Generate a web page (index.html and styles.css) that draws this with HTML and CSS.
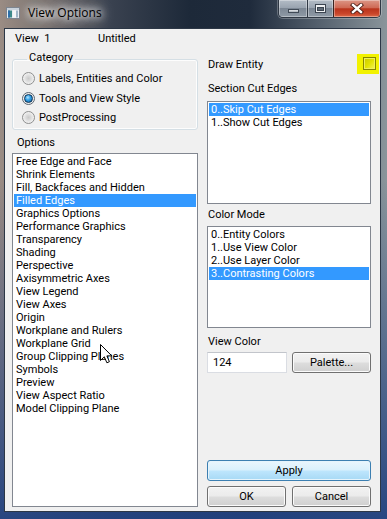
FILE: index.html
```html
<!DOCTYPE html>
<html>
<head>
<meta charset="utf-8">
<title>View Options</title>
<link rel="stylesheet" href="styles.css">
</head>
<body>
<div class="window">
  <div class="titlebar">
    <svg class="appicon" width="14" height="12" viewBox="0 0 14 12">
      <rect x="0.5" y="0.5" width="13" height="11" fill="#e8ecf0" stroke="#7d8590"/>
      <rect x="1" y="1" width="12" height="2" fill="#c9d2dc"/>
      <rect x="2" y="3.5" width="4" height="7" fill="#3d8a8a"/>
      <rect x="2" y="3.5" width="2" height="7" fill="#2d6fa8"/>
      <rect x="7" y="3.5" width="5" height="7" fill="#f4f6f8"/>
      <rect x="10" y="3.5" width="2" height="7" fill="#9fb6c9"/>
    </svg>
    <span class="title">View Options</span>
    <div class="caption">
      <div class="cbtn cmin"><span class="min-bar"></span></div>
      <div class="cbtn cmax"><span class="max-box"></span></div>
      <div class="cbtn cclose">
        <svg width="14" height="11" viewBox="0 0 14 11">
          <path d="M3,2 L11,9 M11,2 L3,9" stroke="#4a1a12" stroke-width="4.2" stroke-linecap="square"/>
          <path d="M3,2 L11,9 M11,2 L3,9" stroke="#ffffff" stroke-width="2.4" stroke-linecap="square"/>
        </svg>
      </div>
    </div>
  </div>
  <div class="client">
    <div class="viewrow"><span class="vnum">View&nbsp;&nbsp;1</span><span class="vname">Untitled</span></div>
    <div class="cols">
      <div class="leftcol">
        <fieldset class="group">
          <legend>Category</legend>
          <div class="radio-row"><span class="radio"></span><span>Labels, Entities and Color</span></div>
          <div class="radio-row"><span class="radio on"></span><span>Tools and View Style</span></div>
          <div class="radio-row"><span class="radio"></span><span>PostProcessing</span></div>
        </fieldset>
        <div class="label opt-label">Options</div>
        <ul class="listbox options">
          <li>Free Edge and Face</li>
          <li>Shrink Elements</li>
          <li>Fill, Backfaces and Hidden</li>
          <li class="sel">Filled Edges</li>
          <li>Graphics Options</li>
          <li>Performance Graphics</li>
          <li>Transparency</li>
          <li>Shading</li>
          <li>Perspective</li>
          <li>Axisymmetric Axes</li>
          <li>View Legend</li>
          <li>View Axes</li>
          <li>Origin</li>
          <li>Workplane and Rulers</li>
          <li>Workplane Grid</li>
          <li>Group Clipping Planes</li>
          <li>Symbols</li>
          <li>Preview</li>
          <li>View Aspect Ratio</li>
          <li>Model Clipping Plane</li>
        </ul>
      </div>
      <div class="rightcol">
        <div class="draw-row">
          <span class="draw-text">Draw Entity</span>
          <span class="hl"><span class="chk"></span></span>
        </div>
        <div class="label sec-label">Section Cut Edges</div>
        <ul class="listbox sec-list">
          <li class="sel">0..Skip Cut Edges</li>
          <li>1..Show Cut Edges</li>
        </ul>
        <div class="label cm-label">Color Mode</div>
        <ul class="listbox cm-list">
          <li>0..Entity Colors</li>
          <li>1..Use View Color</li>
          <li>2..Use Layer Color</li>
          <li class="sel">3..Contrasting Colors</li>
        </ul>
        <div class="label vc-label">View Color</div>
        <div class="vc-row">
          <div class="textbox">124</div>
          <div class="btn palette">Palette...</div>
        </div>
        <div class="spacer"></div>
        <div class="btn apply">Apply</div>
        <div class="btn-row">
          <div class="btn ok">OK</div>
          <div class="btn cancel">Cancel</div>
        </div>
      </div>
    </div>
  </div>
  <svg class="cursor" width="13" height="20" viewBox="0 0 13 20">
    <path d="M0.5,0.5 L0.5,16.5 L4.3,12.8 L6.9,18.8 L9.4,17.7 L6.9,11.9 L11.8,11.9 Z" fill="#ffffff" stroke="#000000" stroke-width="1" stroke-linejoin="miter"/>
  </svg>
</div>
</body>
</html>
```
FILE: styles.css
```css
* { box-sizing: border-box; }

html, body {
  margin: 0;
  padding: 0;
  width: 387px;
  height: 519px;
  overflow: hidden;
}

body {
  font-family: Roboto, "Open Sans", "DejaVu Sans", sans-serif;
  font-size: 11px;
  color: #000;
}

.window {
  position: relative;
  width: 387px;
  height: 519px;
  display: flex;
  flex-direction: column;
  background:
    linear-gradient(to bottom, rgba(30, 60, 120, 0) 0px, rgba(30, 60, 120, 0) 180px, rgba(34, 66, 128, 0.95) 519px),
    linear-gradient(to right, #9a8c84 0px, #7d7470 40px, #3a4250 110px, #1d2939 190px, #1f2b3c 250px, #55616e 320px, #8a959b 387px);
}

/* ---------- title bar ---------- */
.titlebar {
  height: 28px;
  flex: none;
  display: flex;
  align-items: flex-start;
  padding-right: 6px;
}

.appicon {
  margin: 7px 0 0 6px;
  flex: none;
}

.title {
  margin: 5px 0 0 8px;
  font-family: "Open Sans", Roboto, sans-serif;
  font-size: 12px;
  line-height: 16px;
  color: #000;
  text-shadow: 0 0 6px #fff, 0 0 10px #fff, 0 0 14px rgba(255, 255, 255, 0.9), 0 0 18px rgba(255, 255, 255, 0.7);
}

.caption {
  margin-left: auto;
  display: flex;
  height: 18px;
  border: 1px solid #2f3844;
  border-top: none;
  border-radius: 0 0 5px 5px;
  overflow: hidden;
  box-shadow: 0 0 0 1px rgba(255, 255, 255, 0.25);
}

.cbtn {
  height: 17px;
  display: flex;
  align-items: center;
  justify-content: center;
  box-shadow: inset 0 0 0 1px rgba(255, 255, 255, 0.35);
}

.cmin {
  width: 28px;
  background: linear-gradient(to bottom, #b3bcc6 0%, #9aa4b0 45%, #7c8794 50%, #8f9aa6 100%);
}

.cmax {
  width: 26px;
  border-left: 1px solid #2f3844;
  background: linear-gradient(to bottom, #b3bcc6 0%, #9aa4b0 45%, #7c8794 50%, #8f9aa6 100%);
}

.cclose {
  width: 47px;
  border-left: 1px solid #3a2420;
  background: linear-gradient(to bottom, #dc9686 0%, #cf6a55 45%, #b9341c 52%, #c9452a 80%, #dc6a48 100%);
}

.min-bar {
  width: 11px;
  height: 4px;
  margin-top: 5px;
  background: linear-gradient(#e6e9ec, #a9b0b8);
  border: 1px solid #404a56;
}

.max-box {
  width: 11px;
  height: 9px;
  border: 1px solid #3b4450;
  background: #eef0f2;
  box-shadow: inset 0 0 0 1px #eef0f2;
  display: flex;
  padding: 2px 1px 1px;
}
.max-box::after {
  content: "";
  flex: 1;
  background: #5f6a76;
  border: 1px solid #3b4450;
}

/* ---------- client ---------- */
.client {
  margin-left: 4px;
  margin-right: 6px;
  height: 484px;
  flex: none;
  border: 1px solid #2c3746;
  background: #f0f0f0;
  display: flex;
  flex-direction: column;
  padding: 0 9px 4px 7px;
}

.viewrow {
  height: 16px;
  flex: none;
  padding: 3px 0 0 3px;
  line-height: 13px;
  white-space: nowrap;
}

.vnum {
  display: inline-block;
  width: 83px;
}

.cols {
  flex: 1;
  display: flex;
  gap: 9px;
  min-height: 0;
}

.leftcol {
  width: 186px;
  display: flex;
  flex-direction: column;
}

.rightcol {
  width: 164px;
  display: flex;
  flex-direction: column;
}

.label {
  line-height: 13px;
  white-space: nowrap;
}

/* ---------- group box ---------- */
.group {
  margin: 6px 0 0;
  padding: 1px 0 1px 9px;
  border: 1px solid #d5dfe5;
  border-radius: 3px;
  box-shadow: inset 0 0 0 1px #fdfdfd;
  min-width: 0;
}

.group legend {
  margin-left: 5px;
  padding: 0 2px 4px;
  line-height: 13px;
}

.radio-row {
  height: 19.5px;
  display: flex;
  align-items: center;
  gap: 4px;
  white-space: nowrap;
}

.radio {
  width: 13px;
  height: 13px;
  flex: none;
  border-radius: 50%;
  border: 1px solid #8e8f8f;
  background: radial-gradient(circle at 50% 50%, #c9c9c9 0, #dcdcdc 35%, #eeeeee 65%, #f7f7f7 100%);
  display: flex;
  align-items: center;
  justify-content: center;
}

.radio.on {
  border-color: #5a6570;
}

.radio.on::after {
  content: "";
  width: 7px;
  height: 7px;
  border-radius: 50%;
  border: 1px solid #0e3456;
  background: radial-gradient(circle at 40% 35%, #b6e6ff 0, #35a3e8 40%, #0b5a98 100%);
}

.opt-label {
  margin-top: 6px;
  padding-left: 5px;
}

/* ---------- list boxes ---------- */
.listbox {
  list-style: none;
  margin: 0;
  padding: 1px;
  border: 1px solid #828790;
  background: #fff;
  overflow: hidden;
}

.listbox li {
  line-height: 13px;
  height: 13px;
  padding-left: 2px;
  white-space: nowrap;
}

.listbox li.sel {
  background: #3399ff;
  color: #fff;
}

.options {
  margin-top: 4px;
  flex: 1;
}

/* ---------- right column ---------- */
.draw-row {
  margin-top: 9px;
  margin-right: -8px;
  height: 20px;
  display: flex;
  align-items: center;
  justify-content: space-between;
  padding-left: 1px;
}

.hl {
  width: 22px;
  height: 20px;
  padding: 3px 3px 4px 6px;
  background: #f2f200;
  display: flex;
}

.chk {
  flex: 1;
  border: 1px solid #858500;
  background: linear-gradient(135deg, #c9c900 0%, #e2e200 50%, #f4f45a 100%);
  box-shadow: inset 0 0 0 1px #f0f05a;
}

.sec-label { margin-top: 8px; padding-left: 1px; }
.sec-list { margin-top: 6px; height: 103px; flex: none; }
.cm-label { margin-top: 4px; padding-left: 1px; }
.cm-list { margin-top: 5px; height: 102px; flex: none; }
.vc-label { margin-top: 7px; padding-left: 1px; }

.vc-row {
  margin-top: 4px;
  display: flex;
  gap: 5px;
  height: 21px;
}

.textbox {
  width: 80px;
  background: #fff;
  border: 1px solid #dadde3;
  border-top-color: #c2c5cb;
  padding-left: 5px;
  line-height: 19px;
}

.btn {
  border: 1px solid #707070;
  border-radius: 3px;
  background: linear-gradient(to bottom, #f2f2f2 0%, #ebebeb 48%, #dddddd 52%, #cfcfcf 100%);
  box-shadow: inset 0 0 0 1px #fbfbfb;
  text-align: center;
  line-height: 19px;
  height: 21px;
}

.palette { width: 79px; }

.spacer { flex: 1; }

.apply {
  border-color: #3c7fb1;
  background: linear-gradient(to bottom, #eaf6fd 0%, #d9f0fc 48%, #bee6fd 52%, #a7d9f5 100%);
  box-shadow: inset 0 0 0 1px #e6f4fc;
}

.btn-row {
  margin-top: 5px;
  display: flex;
  gap: 6px;
}

.ok { width: 79px; }
.cancel { width: 79px; }

/* mouse pointer over the list */
.cursor {
  position: absolute;
  left: 100px;
  top: 344px;
}
```
